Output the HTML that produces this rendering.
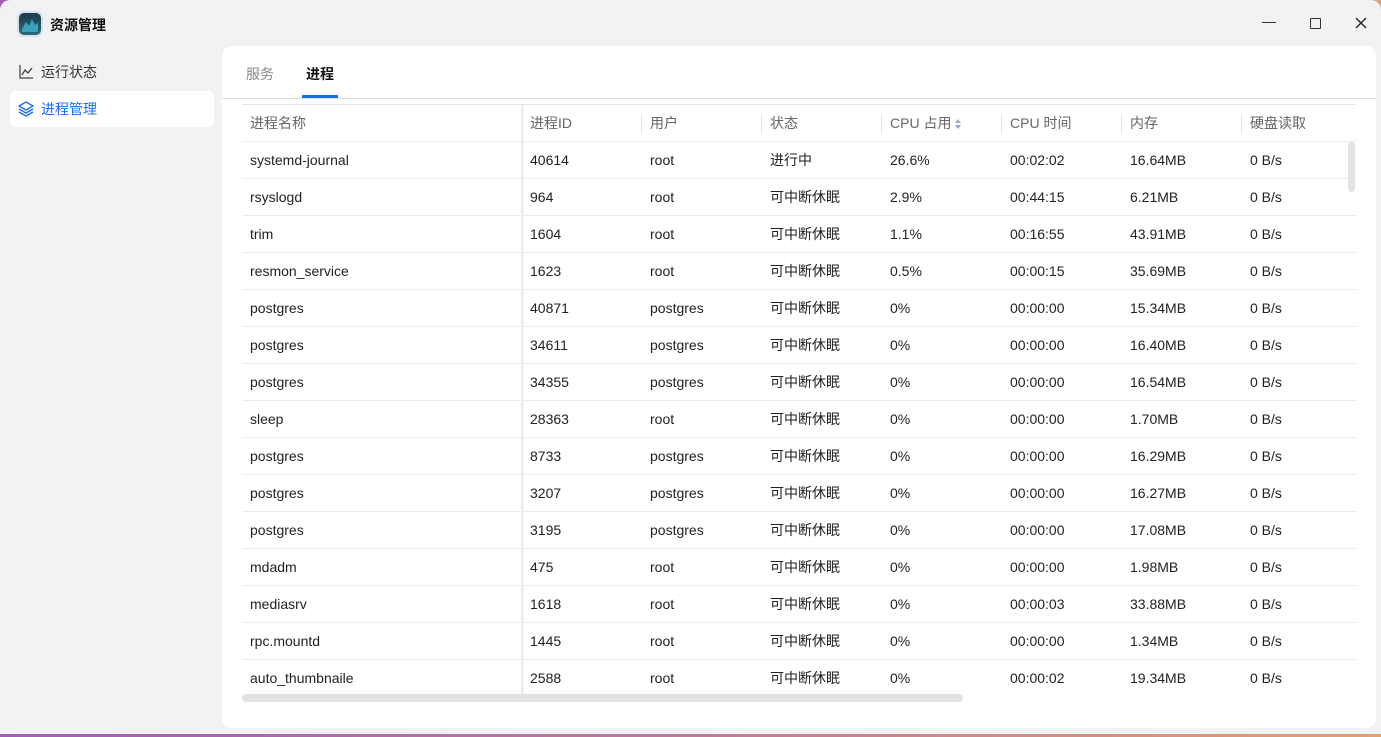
<!DOCTYPE html>
<html><head><meta charset="utf-8"><style>
*{margin:0;padding:0;box-sizing:border-box}
body{width:1381px;height:737px;overflow:hidden;background:linear-gradient(90deg,#a45cb8 0%,#c07a9a 50%,#e0a070 100%);font-family:"Liberation Sans","Noto Sans CJK SC",sans-serif;position:relative}
.win{position:absolute;left:0;top:0;width:1381px;height:734px;background:#f1f2f4;border-radius:10px 10px 0 0;overflow:hidden}
.logo{position:absolute;left:19px;top:13px;width:22px;height:22px;border-radius:5px;background:linear-gradient(#1d3a4a,#2a6a7a);box-shadow:0 0 0 2px #d6e0ee}
.title{position:absolute;left:50px;top:15px;font-size:14px;color:#111;font-weight:bold}
.ctl{position:absolute;top:12px;font-size:14px;color:#222}
.nav{position:absolute;left:10px;width:204px;height:36px;border-radius:6px;font-size:14px;line-height:36px;padding-left:31px;color:#333}
.nav.a{background:#fff;color:#1a6cf0}
.nav svg{position:absolute;left:8px;top:10px}
.card{position:absolute;left:222px;top:46px;width:1154px;height:682px;background:#fff;border-radius:10px;overflow:hidden}
.tab{position:absolute;top:18px;font-size:14px}
.ul{position:absolute;left:80px;top:49px;width:36px;height:3px;background:#1a6cf0}
.div{position:absolute;left:0;top:52px;width:1154px;height:1px;background:#ddd}
.tbl{position:absolute;left:20px;top:58px;width:1114px;height:590px;overflow:hidden;border-top:1px solid #e4e4e4}
.row{position:absolute;left:0;width:1114px;height:37px;border-bottom:1px solid #ebebeb;font-size:14px;color:#222}
.row span{position:absolute;top:10px;line-height:17px;height:17px}
.hd{color:#666;top:0}
.hd i{position:absolute;top:9px;width:1px;height:19px;background:#e6e6e6}
.sh{position:absolute;left:279px;top:0;width:3px;height:590px;background:linear-gradient(90deg,#e8e8e8,#f6f6f6)}
.vs{position:absolute;left:1126px;top:96px;width:7px;height:50px;border-radius:4px;background:#e2e3e4}
.hs{position:absolute;left:20px;top:648px;width:721px;height:8px;border-radius:4px;background:#e2e3e4}
.srt{display:inline-block;vertical-align:middle;margin-left:3px}
</style></head><body><div class="win">
<div class="logo"><svg width="22" height="22"><path d="M3 16 L7 9 L10 13 L13 6 L16 12 L19 10 L19 19 L3 19Z" fill="#3aa0b8"/></svg></div>
<div class="title">资源管理</div>
<div class="ctl" style="left:1262px;top:22px;width:14px;height:1px;background:#333"></div>
<div class="ctl" style="left:1310px;top:18px;width:11px;height:11px;border:1.5px solid #333;border-radius:1px"></div>
<svg class="ctl" style="left:1355px;top:17px" width="12" height="12"><path d="M1 1L11 11M11 1L1 11" stroke="#222" stroke-width="1.4"/></svg>
<div class="nav" style="top:54px"><svg width="16" height="16"><path d="M2 1V14H15M4 11L7 6L10 9L14 4" stroke="#444" fill="none" stroke-width="1.3"/></svg>运行状态</div>
<div class="nav a" style="top:91px"><svg width="16" height="16"><path d="M8 1L15 5L8 9L1 5Z M1 8L8 12L15 8 M1 11L8 15L15 11" stroke="#1a6cf0" fill="none" stroke-width="1.3" stroke-linejoin="round"/></svg>进程管理</div>
<div class="card">
<div class="tab" style="left:24px;color:#888">服务</div>
<div class="tab" style="left:84px;color:#111;font-weight:bold">进程</div>
<div class="ul"></div><div class="div"></div>
<div class="tbl" id="t">
<div class="row hd" style="height:37px"><span style="left:8px">进程名称</span><span style="left:288px">进程ID</span><i style="left:399px"></i><span style="left:408px">用户</span><i style="left:519px"></i><span style="left:528px">状态</span><i style="left:639px"></i><span style="left:648px">CPU 占用<svg class="srt" width="8" height="12"><path d="M4 1L7 5H1Z" fill="#aab"/><path d="M4 11L7 7H1Z" fill="#8fa3c8"/></svg></span><i style="left:759px"></i><span style="left:768px">CPU 时间</span><i style="left:879px"></i><span style="left:888px">内存</span><i style="left:999px"></i><span style="left:1008px">硬盘读取</span></div>
</div>
<div class="vs"></div><div class="hs"></div>
</div></div>
<script>
var d=[["systemd-journal","40614","root","进行中","26.6%","00:02:02","16.64MB"],["rsyslogd","964","root","可中断休眠","2.9%","00:44:15","6.21MB"],["trim","1604","root","可中断休眠","1.1%","00:16:55","43.91MB"],["resmon_service","1623","root","可中断休眠","0.5%","00:00:15","35.69MB"],["postgres","40871","postgres","可中断休眠","0%","00:00:00","15.34MB"],["postgres","34611","postgres","可中断休眠","0%","00:00:00","16.40MB"],["postgres","34355","postgres","可中断休眠","0%","00:00:00","16.54MB"],["sleep","28363","root","可中断休眠","0%","00:00:00","1.70MB"],["postgres","8733","postgres","可中断休眠","0%","00:00:00","16.29MB"],["postgres","3207","postgres","可中断休眠","0%","00:00:00","16.27MB"],["postgres","3195","postgres","可中断休眠","0%","00:00:00","17.08MB"],["mdadm","475","root","可中断休眠","0%","00:00:00","1.98MB"],["mediasrv","1618","root","可中断休眠","0%","00:00:03","33.88MB"],["rpc.mountd","1445","root","可中断休眠","0%","00:00:00","1.34MB"],["auto_thumbnaile","2588","root","可中断休眠","0%","00:00:02","19.34MB"]];
var x=[8,288,408,528,648,768,888,1008],h="";
d.forEach(function(r,i){h+='<div class="row" style="top:'+(37+i*37)+'px">';r.concat(["0 B/s"]).forEach(function(c,j){h+='<span style="left:'+x[j]+'px">'+c+'</span>'});h+='</div>'});
h+='<div class="sh"></div>';
document.getElementById('t').insertAdjacentHTML('beforeend',h);
</script>
</body></html>
